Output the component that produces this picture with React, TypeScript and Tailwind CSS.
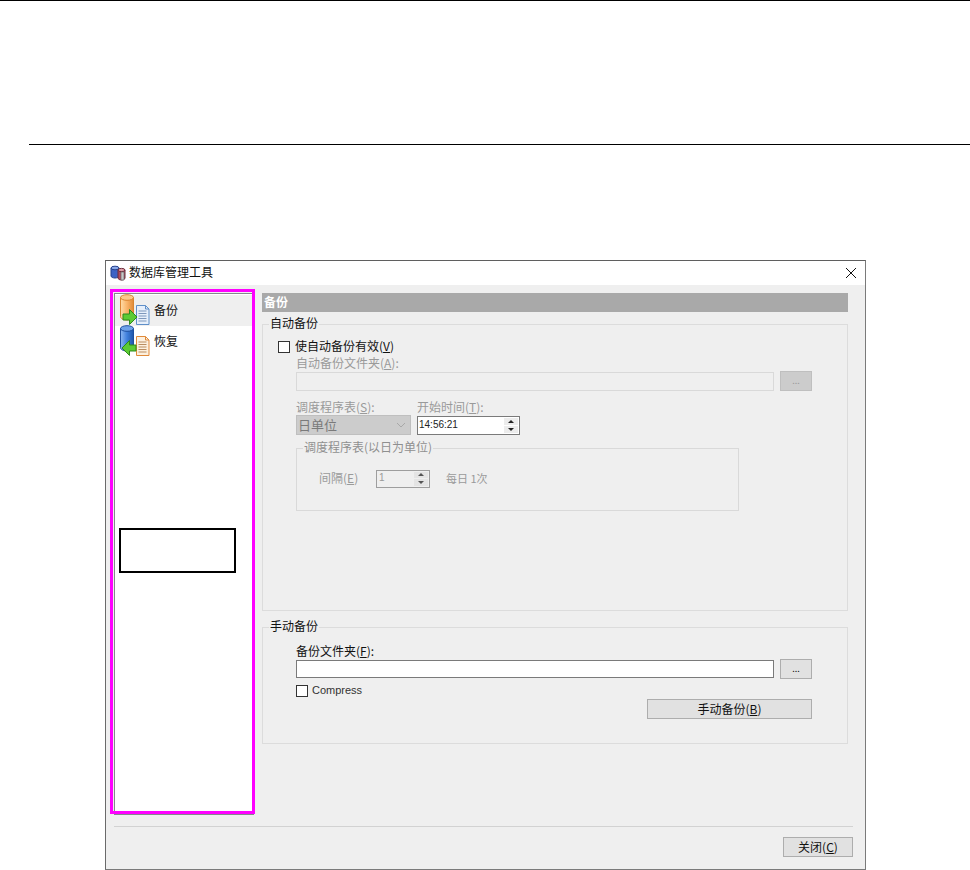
import React from 'react';

const CJK = '[font-family:"Noto_Sans_CJK_SC","Liberation_Sans",sans-serif]';

// database cylinder with a sheet of paper and a green arrow
const DbIcon = ({ restore }: { restore?: boolean }) => {
  const id = restore ? 'cylBlue' : 'cylOrange';
  const light = restore ? '#8db8f2' : '#ffdca8';
  const mid = restore ? '#3f7fdc' : '#f9b469';
  const dark = restore ? '#1f55a8' : '#e08a38';
  const top = restore ? '#6ea2ea' : '#fcc98c';
  const edge = restore ? '#1f4f9e' : '#d98531';
  const sheet = restore ? '#fdf0de' : '#e6effb';
  const sheetEdge = restore ? '#e08a3a' : '#5f8fc9';
  const lines = restore ? '#b98d60' : '#7d97bb';
  return (
    <svg width="32" height="32" viewBox="0 0 32 32" className="shrink-0">
      <defs>
        <linearGradient id={id} x1="0" x2="1" y1="0" y2="0">
          <stop offset="0" stopColor={light} />
          <stop offset="0.5" stopColor={mid} />
          <stop offset="1" stopColor={dark} />
        </linearGradient>
      </defs>
      <path d="M1.500 3.500v19c0 2 2.800 3.500 6.500 3.500s6.500-1.500 6.500-3.500v-19z" fill={`url(#${id})`} stroke={edge} />
      <ellipse cx="8" cy="3.500" rx="6.500" ry="2.800" fill={top} stroke={edge} />
      <path d="M17.500 11.500h9l3.500 3.500v15.500h-12.500z" fill={sheet} stroke={sheetEdge} />
      <path d="M26.500 11.500v3.500h3.500" fill="none" stroke={sheetEdge} />
      <path d="M19.500 17h8M19.500 19.500h8M19.500 22h8M19.500 24.500h8M19.500 27h8" stroke={lines} />
      {restore ? (
        <path d="M17 20h-6.500v-4.500l-7.500 7.500 7.500 7.500v-4.500h6.500z" fill="#5ccb34" stroke="#2d8a1c" />
      ) : (
        <path d="M4 20h6.500v-4.500l7.500 7.500-7.500 7.500v-4.500h-6.500z" fill="#5ccb34" stroke="#2d8a1c" />
      )}
    </svg>
  );
};

const AppIcon = () => (
  <svg width="17" height="17" viewBox="0 0 17 17" className="shrink-0">
    <path d="M1 3v8c0 1.200 2 2 4 2s4-.8 4-2v-8z" fill="#3d62c4" stroke="#24408c" />
    <ellipse cx="5" cy="3" rx="4" ry="1.800" fill="#8aa8e8" stroke="#24408c" />
    <path d="M8 5v8c0 1.200 1.800 2 3.500 2s3.500-.8 3.500-2v-8z" fill="#b04a5c" stroke="#6c2a3a" />
    <ellipse cx="11.500" cy="5" rx="3.500" ry="1.600" fill="#e0a0a8" stroke="#6c2a3a" />
    <path d="M11 7h3v8h-3z" fill="#c9c9c9" stroke="#666666" strokeWidth="0.700" />
  </svg>
);

const Spin = ({ disabled }: { disabled?: boolean }) => (
  <div className="flex flex-col w-[15px] h-full ml-auto gap-px py-px pr-px">
    <div className={`flex-1 flex items-center justify-center ${disabled ? 'bg-[#e4e4e4]' : 'bg-[#ececec]'}`}>
      <div className={`w-0 h-0 border-x-[3px] border-x-transparent border-b-[3px] ${disabled ? 'border-b-[#555555]' : 'border-b-[#222222]'}`} />
    </div>
    <div className={`flex-1 flex items-center justify-center ${disabled ? 'bg-[#e4e4e4]' : 'bg-[#ececec]'}`}>
      <div className={`w-0 h-0 border-x-[3px] border-x-transparent border-t-[3px] ${disabled ? 'border-t-[#555555]' : 'border-t-[#222222]'}`} />
    </div>
  </div>
);

const Legend = ({ children, muted }: { children: React.ReactNode; muted?: boolean }) => (
  <span className={`absolute left-[6px] -top-[10px] px-px bg-[#efefef] text-[12px] leading-[16px] ${muted ? 'text-[#8f8f8f]' : 'text-[#111111]'}`}>
    {children}
  </span>
);

export default function App() {
  return (
    <div className={`w-[970px] h-[870px] bg-white overflow-hidden ${CJK}`}>
      <div className="h-px bg-black" />
      <div className="h-px bg-black ml-[29px] mt-[143px]" />

      <div className="relative ml-[105px] mt-[115px] w-[761px] h-[610px] bg-[#efefef] border border-[#7a7a7a] border-t-[#5f5f5f] border-l-[#6a6a6a]">
        {/* title bar */}
        <div className="h-[24px] bg-white flex items-center pl-[4px] pr-[5px] gap-[2px]">
          <AppIcon />
          <span className="text-[12px] leading-none text-[#111111] -mt-[2px]">数据库管理工具</span>
          <svg width="12" height="12" viewBox="0 0 12 12" className="ml-auto mr-[3px]">
            <path d="M1 1l10 10M11 1l-10 10" stroke="#111111" strokeWidth="1" />
          </svg>
        </div>

        <div className="flex pl-[8px] pt-[8px]">
          {/* left list */}
          <div className="w-[140px] h-[522px] bg-white border border-[#82878c] pt-px">
            <div className="h-[31px] bg-[#efefef] flex items-center gap-[3px] pl-[4px] pb-[2px]">
              <DbIcon />
              <span className="text-[12px] text-[#111111]">备份</span>
            </div>
            <div className="h-[31px] flex items-center gap-[3px] pl-[4px] pb-[2px]">
              <DbIcon restore />
              <span className="text-[12px] text-[#111111]">恢复</span>
            </div>
          </div>

          {/* right panel */}
          <div className="w-[586px] ml-[8px]">
            <div className="h-[19px] bg-[#a9a9a9] text-white text-[12px] font-bold leading-[17px] pl-[2px]">备份</div>

            <div className="relative mt-[12px] h-[287px] border border-[#dcdcdc] pl-[15px] pt-[16px]">
              <Legend>自动备份</Legend>
              <div className="flex items-center h-[12px] gap-[5px]">
                <div className="w-[12px] h-[12px] bg-white border border-[#333333]" />
                <span className="text-[12px] text-[#111111] -mt-[2px]">使自动备份有效(<u>V</u>)</span>
              </div>
              <div className="pl-[18px] text-[#9a9a9a]">
                <div className="text-[12px] leading-[16px] mt-[2px]">自动备份文件夹(<u>A</u>):</div>
                <div className="flex items-start">
                  <div className="w-[478px] h-[19px] mt-px bg-[#efefef] border border-[#d9d9d9]" />
                  <div className="w-[32px] h-[20px] ml-[6px] bg-[#cccccc] border border-[#bfbfbf] text-[9px] leading-[18px] text-center">...</div>
                </div>
                <div className="flex mt-[8px] gap-[6px]">
                  <div className="w-[115px]">
                    <div className="text-[12px] leading-[16px]">调度程序表(<u>S</u>):</div>
                    <div className="h-[20px] bg-[#cccccc] border border-[#bfbfbf] flex items-center pl-px text-[13px] text-[#7a7a7a]">
                      日单位
                      <svg width="10" height="6" viewBox="0 0 10 6" className="ml-auto mr-[4px]">
                        <path d="M1 1l4 4 4-4" fill="none" stroke="#a8a8a8" />
                      </svg>
                    </div>
                  </div>
                  <div className="w-[103px]">
                    <div className="text-[12px] leading-[16px]">开始时间(<u>T</u>):</div>
                    <div className="h-[19px] mt-px bg-white border border-[#7a7a7a] flex items-center pl-px pb-[2px] text-[10px] text-[#222222] [font-family:'Liberation_Sans',sans-serif]">
                      14:56:21
                      <div className="self-stretch ml-auto -mb-[2px] flex">
                        <Spin />
                      </div>
                    </div>
                  </div>
                </div>
                <div className="relative w-[443px] h-[63px] mt-[13px] border border-[#d9d9d9] flex items-center pl-[22px] text-[11px]">
                  <Legend muted>调度程序表(以日为单位)</Legend>
                  <span className="w-[57px] text-[12px] -mt-[3px]">间隔(<u>E</u>)</span>
                  <div className="w-[54px] h-[18px] -mt-[2px] border border-[#9e9e9e] flex items-center pl-[2px] pb-[2px] text-[10px] [font-family:'Liberation_Sans',sans-serif]">
                    1
                    <div className="self-stretch ml-auto -mb-[2px] flex">
                      <Spin disabled />
                    </div>
                  </div>
                  <span className="ml-[16px] -mt-[3px]">每日 1次</span>
                </div>
              </div>
            </div>

            <div className="relative mt-[16px] h-[117px] border border-[#dcdcdc] pl-[33px] pt-[15px]">
              <Legend>手动备份</Legend>
              <div className="text-[12px] leading-[16px] text-[#111111]">备份文件夹(<u>F</u>):</div>
              <div className="flex items-start">
                <div className="w-[478px] h-[18px] mt-px bg-white border border-[#7a7a7a]" />
                <div className="w-[32px] h-[20px] ml-[6px] bg-[#e1e1e1] border border-[#adadad] text-[9px] leading-[18px] text-center text-[#111111]">...</div>
              </div>
              <div className="flex items-center h-[12px] gap-[4px] mt-[6px]">
                <div className="w-[12px] h-[12px] bg-white border border-[#333333]" />
                <span className="text-[11px] text-[#333333] -mt-[2px] [font-family:'Liberation_Sans',sans-serif]">Compress</span>
              </div>
              <div className="ml-[351px] mt-[2px] w-[165px] h-[20px] bg-[#e1e1e1] border border-[#adadad] text-[12px] leading-[18px] text-center text-[#111111]">
                手动备份(<u>B</u>)
              </div>
            </div>
          </div>
        </div>

        {/* footer */}
        <div className="ml-[8px] mr-[12px] mt-[11px] h-px bg-[#d2d2d2]" />
        <div className="flex justify-end mr-[12px] mt-[10px]">
          <div className="w-[70px] h-[20px] bg-[#e1e1e1] border border-[#adadad] text-[12px] leading-[18px] text-center text-[#111111]">
            关闭(<u>C</u>)
          </div>
        </div>

        {/* annotations drawn over the screenshot */}
        <div className="absolute left-[4px] top-[28px] w-[145px] h-[525px] border-[3px] border-[#ff00ff]" />
        <div className="absolute left-[13px] top-[267px] w-[117px] h-[45px] bg-white border-2 border-black" />
      </div>
    </div>
  );
}
